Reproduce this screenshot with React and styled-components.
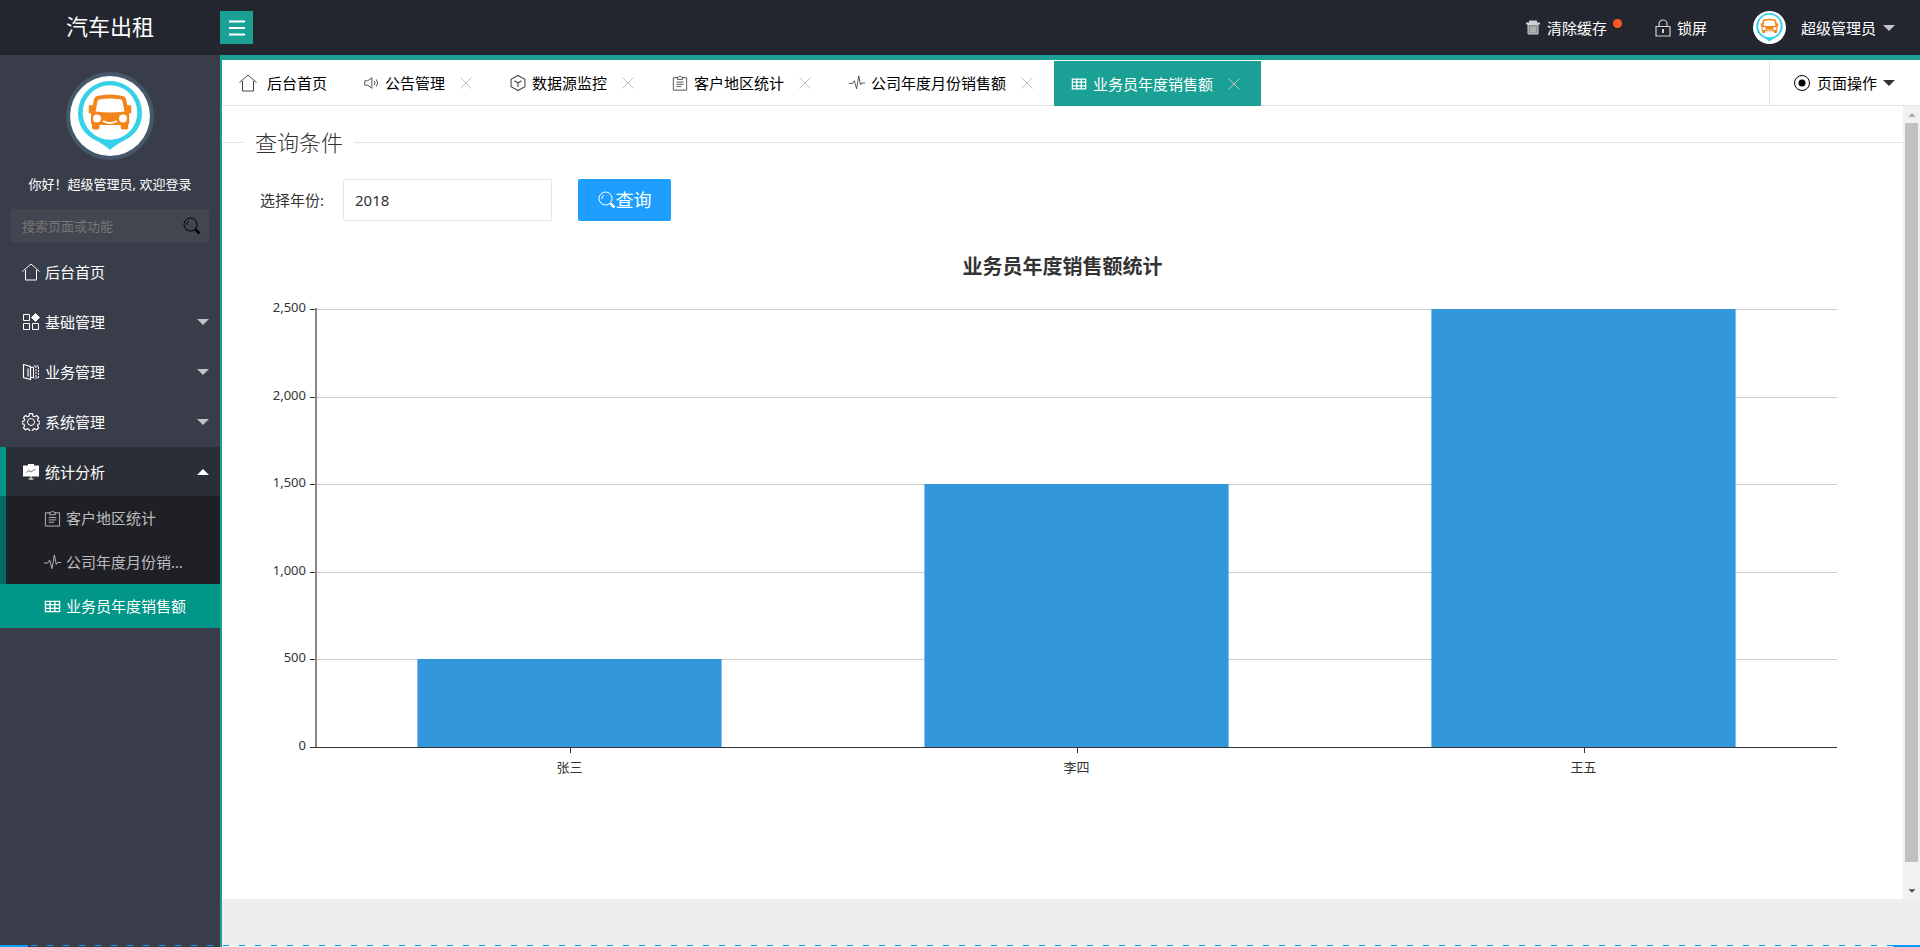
import { useLayoutEffect, useRef, useState } from "react";
import styled, { createGlobalStyle, ThemeProvider } from "styled-components";

const theme = {
    header: "#23262e",
    side: "#393d49",
    teal: "#1aa094",
    active: "#009688",
    blue: "#1e9fff",
    line: "#e2e2e2",
};

const GlobalStyle = createGlobalStyle`
    * {
        box-sizing: border-box;
    }
    body {
        margin: 0;
        font-family: "Noto Sans", "Noto Sans CJK SC", sans-serif;
        font-size: 15px;
        line-height: 24px;
        color: #333;
    }
    a {
        color: inherit;
        text-decoration: none;
    }
    button, input {
        font: inherit;
    }
    ul {
        list-style: none;
        margin: 0;
        padding: 0;
    }
`;

const Page = styled.div`
    display: flex;
    flex-direction: column;
    height: 100vh;
    min-height: 700px;
`;

const Header = styled.header`
    display: flex;
    align-items: center;
    height: 55px;
    background: ${({ theme }) => theme.header};
    color: #fff;
`;

const Brand = styled.h1`
    width: 220px;
    margin: 0;
    padding-bottom: 3px;
    font-size: 22px;
    font-weight: 400;
    text-align: center;
`;

const MenuButton = styled.button`
    display: grid;
    place-items: center;
    width: 33px;
    height: 33px;
    padding: 0;
    border: 0;
    background: ${({ theme }) => theme.teal};
    color: #fff;
`;

const HeaderNav = styled.nav`
    display: flex;
    align-items: center;
    margin-left: auto;
    padding-right: 25px;
`;

const HeaderLink = styled.a`
    position: relative;
    display: flex;
    align-items: center;
    gap: 5px;
    margin-right: ${({ $space }) => $space || 0}px;
    > svg {
        color: #d0d1d3;
    }
`;

const Dot = styled.span`
    position: absolute;
    top: 3px;
    right: -15px;
    width: 9px;
    height: 9px;
    border-radius: 50%;
    background: #ff5722;
`;

const UserName = styled.span`
    margin: 0 2px 0 10px;
`;

const Caret = styled.span`
    border: 6px solid transparent;
    border-top-color: ${({ color }) => color || "#c2c4c8"};
    border-bottom-width: 0;
    ${({ $up }) => $up && `
        border-top-width: 0;
        border-bottom: 6px solid #fff;
    `}
`;

const Main = styled.div`
    display: flex;
    flex: 1;
    min-height: 0;
`;

const Side = styled.aside`
    flex: none;
    width: 220px;
    background: ${({ theme }) => theme.side};
    color: #fff;
`;

const Profile = styled.div`
    display: flex;
    flex-direction: column;
    align-items: center;
    padding: 17px 11px 5px;
    font-size: 13px;
`;

const Avatar = styled.div`
    display: flex;
    border: 4px solid #44576b;
    border-radius: 50%;
`;

const Greeting = styled.p`
    margin: 12px 0 13px;
`;

const SearchBox = styled.label`
    display: flex;
    align-items: center;
    align-self: stretch;
    height: 33px;
    padding: 0 8px 0 11px;
    border-radius: 2px;
    background: #434650;
    color: #000;
`;

const SearchInput = styled.input`
    flex: 1;
    min-width: 0;
    padding: 0;
    border: 0;
    outline: 0;
    background: none;
    color: #fff;
    &::placeholder {
        color: #767676;
    }
`;

const MenuLink = styled.a`
    display: flex;
    align-items: center;
    gap: 5px;
    height: ${({ $open }) => ($open ? 49 : 50)}px;
    padding: 0 11px 0 22px;
    ${({ $open, theme }) => $open && `
        padding-left: 16px;
        border-left: 6px solid ${theme.active};
        background: #2b2e37;
    `}
    ${Caret} {
        margin-left: auto;
    }
`;

const SubLink = styled.a`
    display: flex;
    align-items: center;
    gap: 5px;
    height: 44px;
    padding: 0 28px 0 38px;
    border-left: 6px solid ${({ $active, theme }) => ($active ? theme.active : "#006b61")};
    background: ${({ $active, theme }) => ($active ? theme.active : "#1f2026")};
    color: ${({ $active }) => ($active ? "#fff" : "#bcbdbf")};
    svg {
        flex: none;
    }
    span {
        overflow: hidden;
        text-overflow: ellipsis;
        white-space: nowrap;
    }
`;

const Body = styled.main`
    display: flex;
    flex: 1;
    flex-direction: column;
    min-width: 0;
    border-top: 5px solid ${({ theme }) => theme.teal};
    border-left: 2px solid ${({ theme }) => theme.teal};
`;

const Tabs = styled.nav`
    display: flex;
    align-items: stretch;
    height: 46px;
    padding-top: 1px;
    border-bottom: 1px solid ${({ theme }) => theme.line};
`;

const Tab = styled.div`
    display: flex;
    align-items: center;
    gap: 5px;
    margin-bottom: ${({ $active }) => ($active ? -1 : 0)}px;
    padding: 0 ${({ $home }) => ($home ? 19 : 17)}px 0 17px;
    background: ${({ $active, theme }) => ($active ? theme.teal : "none")};
    color: ${({ $active }) => ($active ? "#fff" : "#000")};
    a {
        display: flex;
        align-items: center;
        gap: ${({ $home }) => ($home ? 10 : 6)}px;
        white-space: nowrap;
    }
    a svg {
        color: ${({ $active }) => ($active ? "#fff" : "#444")};
    }
`;

const CloseButton = styled.button`
    display: grid;
    place-items: center;
    width: 20px;
    height: 20px;
    margin-left: 6px;
    padding: 0;
    border: 0;
    background: none;
    color: #c2c2c2;
`;

const PageActions = styled.button`
    display: flex;
    align-items: center;
    gap: 6px;
    margin-left: auto;
    padding: 0 25px 0 23px;
    border: 0;
    border-left: 1px solid ${({ theme }) => theme.line};
    background: none;
    color: #000;
`;

const Frame = styled.section`
    display: flex;
    flex: 1;
    min-height: 0;
    background: #fff;
`;

const Content = styled.div`
    flex: 1;
    min-width: 0;
    padding-top: 21px;
`;

const Legend = styled.h2`
    display: flex;
    align-items: center;
    gap: 11px;
    margin: 0;
    font-size: 22px;
    font-weight: 300;
    line-height: 30px;
    &::before, &::after {
        content: "";
        width: 22px;
        height: 1px;
        background: ${({ theme }) => theme.line};
    }
    &::after {
        flex: 1;
    }
`;

const QueryForm = styled.form`
    display: flex;
    align-items: center;
    margin: 22px 0 0 38px;
`;

const YearInput = styled.input`
    width: 209px;
    height: 42px;
    margin: 0 26px 0 19px;
    padding: 0 11px;
    border: 1px solid #e6e6e6;
    border-radius: 2px;
    outline: 0;
    color: #333;
`;

const QueryButton = styled.button`
    display: flex;
    align-items: center;
    justify-content: center;
    width: 93px;
    height: 42px;
    padding: 0;
    border: 0;
    border-radius: 2px;
    background: ${({ theme }) => theme.blue};
    color: #fff;
    font-size: 18px;
`;

const ChartBox = styled.figure`
    margin: 32px 0 0;
`;

const ChartTitle = styled.figcaption`
    font-size: 20px;
    font-weight: 700;
    line-height: 28px;
    text-align: center;
`;

const ChartSvg = styled.svg`
    display: block;
    width: 100%;
    height: 510px;
    font-size: 13px;
    fill: #333;
`;

const ScrollBar = styled.div`
    display: flex;
    flex-direction: column;
    align-items: center;
    width: 17px;
    background: #f1f1f1;
`;

const ScrollArrow = styled.span`
    display: grid;
    place-items: center;
    height: 17px;
    color: ${({ color }) => color};
`;

const ScrollTrack = styled.div`
    display: flex;
    flex: 1;
    width: 13px;
    padding-bottom: 20px;
`;

const ScrollThumb = styled.div`
    flex: 1;
    background: #c1c1c1;
`;

const Footer = styled.footer`
    height: 48px;
    background: #eee;
`;

const BottomEdge = styled.div`
    position: fixed;
    left: 0;
    right: 0;
    bottom: 0;
    height: 2px;
    background:
        linear-gradient(#0a9cfd, #0a9cfd) left / 28px 2px no-repeat,
        linear-gradient(#0a9cfd, #0a9cfd) right / 27px 2px no-repeat,
        linear-gradient(90deg, #0a9cfd 6px, transparent 6px) 31px 0 / 16px 1px repeat-x;
`;

const shapes = {
    home: <path d="M.5 8.500 9 1l8.500 7.500M3.500 7v10h11V7" />,
    menu: <path d="M1 2.500h16M1 9h16M1 15.500h16" strokeWidth="2" />,
    blocks: (
        <>
            <path d="M1.500 1.500h6v6h-6zM1.500 10.500h6v6h-6zM10.500 10.500h6v6h-6z" />
            <path d="m13.500.5 4 4-4 4-4-4z" fill="currentColor" />
        </>
    ),
    book: (
        <>
            <path d="M1.500 1.500l7 2v13l-7-2zM6 5.500v8" strokeWidth="1.200" />
            <path d="M8.500 4.500h3v10h-3" />
            <path d="M11.500 3h5v12h-5M14 3v12" strokeDasharray="2 1" />
        </>
    ),
    gear: (
        <>
            <circle cx="9" cy="9" r="3.500" />
            <path
                d="M7.500.7h3l.5 2.300 1.600.7 2.100-1.200 2 2-1.200 2.100.6 1.500 2 .5v2l-2 .6-.6 1.500 1.100 2.100-1.900 1.900-2.100-1.100-1.500.7-.6 2h-3l-.5-2-1.500-.7-2.100 1.100-1.900-1.900 1.100-2.100-.6-1.500-2-.6v-2l2-.5.7-1.500-1.200-2.100 2-2 2.100 1.200 1.400-.7z"
                strokeWidth="1.200"
            />
        </>
    ),
    board: (
        <>
            <path d="M1 2.500h16v11H1zM6 1h6v2H6z" fill="currentColor" stroke="none" />
            <path d="M9 13v3.500M6.500 16h5" />
            <path d="m4.500 9.500 2.500-2 2 1.500 4.500-3" stroke="#6c7080" />
        </>
    ),
    clipboard: <path d="M6 3H1.500v14h15V3H12M6 5V2.500h1.500L9 1l1.500 1.500H12V5zM5 8h8M5 10.500h8M5 13h5.500" />,
    pulse: <path d="M0 9.500h4l2-3 2.500 9L11 1l2 10 1.500-2H18" />,
    table: <path d="M1.500 3.500h15v11h-15zM1.500 7h15M1.500 11h15M6.500 3.500v11M11.500 3.500v11" strokeWidth="1.400" />,
    speaker: <path d="M2 6.500h3.500L10 3v12l-4.500-3.500H2zM12.500 6.500q2 2.500 0 5M15 5q3 4 0 8" />,
    cube: <path d="m9 .5 7.800 4.300v8.400L9 17.500l-7.800-4.300V4.800zM5 6.500 9 9l4-2.500M9 9v4.500" strokeWidth="1.200" />,
    search: (
        <>
            <circle cx="7.500" cy="7.500" r="6.500" />
            <path d="M4 8a3.500 3.500 0 0 1 2-4" />
            <path d="m12.500 12.500 4 4" strokeWidth="2.500" />
        </>
    ),
    close: <path d="m3.500 3.500 11 11M14.500 3.500l-11 11" />,
    trash: (
        <>
            <path d="M2 4.500h14M6 4V2.500h6V4" strokeWidth="2" />
            <path d="M4 5.500h10V15H4z" fill="#8b8d92" />
            <path d="M7 7.500v6M9 7.500v6M11 7.500v6" />
        </>
    ),
    lock: (
        <>
            <path d="M2 7.500h14V17H2zM5 7.500V5a4 4 0 0 1 8 0v2.500" strokeWidth="1.200" />
            <path d="M9 10v4" strokeWidth="2" />
        </>
    ),
    radio: (
        <>
            <circle cx="9" cy="9" r="7.500" />
            <circle cx="9" cy="9" r="3.500" fill="currentColor" stroke="none" />
        </>
    ),
    up: <path d="m5 11 4-4 4 4z" fill="currentColor" stroke="none" />,
    down: <path d="m5 7 4 4 4-4z" fill="currentColor" stroke="none" />,
};

function Icon({ name, size = 18 }) {
    return (
        <svg width={size} height={size} viewBox="0 0 18 18" fill="none" stroke="currentColor" aria-hidden="true">
            {shapes[name]}
        </svg>
    );
}

function CarLogo({ size }) {
    return (
        <svg width={size} height={size} viewBox="0 0 80 80" role="img" aria-label="汽车出租">
            <circle cx="40" cy="40" r="40" fill="#fff" />
            <path d="M40 5a32 32 0 0 1 32 32c0 13-7 22-17 27-6 3-11 6-15 10-4-4-9-7-15-10C15 59 8 50 8 37A32 32 0 0 1 40 5z" fill="#35d1e9" />
            <circle cx="40" cy="36.5" r="27.300" fill="#fff" />
            <path d="M27 20q13-3 26 0 2 .5 3 3l2.500 12 .7 3v10h-1v3.500q0 2-2 2h-3.500q-2 0-2-2V49H29.500v2.500q0 2-2 2H24q-2 0-2-2V48h-1V38l.7-3L24 23q1-2.500 3-3z" fill="#f28519" />
            <path d="M29 23.500q11-2 22 0 1 .5 1.500 2l2 10q-14.500 2-29 0l2-10q.5-1.500 1.500-2z" fill="#fff" />
            <path d="M23 30h-3.500v6.500H22M57 30h3.500v6.500H58" fill="#f28519" stroke="#f28519" strokeWidth="1.500" />
            <circle cx="27" cy="42.500" r="4" fill="#fff" />
            <circle cx="53" cy="42.500" r="4" fill="#fff" />
            <path d="M33 45q7 4 14 0" fill="none" stroke="#fff" strokeWidth="2" />
        </svg>
    );
}

const menu = [
    { icon: "home", text: "后台首页" },
    { icon: "blocks", text: "基础管理", more: true },
    { icon: "book", text: "业务管理", more: true },
    { icon: "gear", text: "系统管理", more: true },
];

const subMenu = [
    { icon: "clipboard", text: "客户地区统计" },
    { icon: "pulse", text: "公司年度月份销售额" },
    { icon: "table", text: "业务员年度销售额", active: true },
];

const tabs = [
    { icon: "speaker", text: "公告管理" },
    { icon: "cube", text: "数据源监控" },
    { icon: "clipboard", text: "客户地区统计" },
    { icon: "pulse", text: "公司年度月份销售额" },
    { icon: "table", text: "业务员年度销售额", active: true },
];

const sales = [
    { name: "张三", value: 500 },
    { name: "李四", value: 1500 },
    { name: "王五", value: 2500 },
];

const ticks = [0, 500, 1000, 1500, 2000, 2500];

function BarChart() {
    const ref = useRef(null);
    const [width, setWidth] = useState(0);

    useLayoutEffect(() => {
        const measure = () => setWidth(ref.current.getBoundingClientRect().width);
        measure();
        window.addEventListener("resize", measure);
        return () => window.removeEventListener("resize", measure);
    }, []);

    const left = 94;
    const right = width - 66;
    const top = 28;
    const bottom = 466;
    const y = (value) => Math.round(bottom - (value / 2500) * (bottom - top));
    const band = (right - left) / sales.length;

    return (
        <ChartBox>
            <ChartTitle>业务员年度销售额统计</ChartTitle>
            <ChartSvg ref={ref}>
                {width > 0 && (
                    <>
                        {ticks.map((tick) => (
                            <g key={tick}>
                                <rect x={left} y={y(tick)} width={right - left} height="1" fill="#ccc" />
                                <rect x={left - 6} y={y(tick)} width="6" height="1" />
                                <text x={left - 10} y={y(tick) + 3} textAnchor="end">
                                    {tick.toLocaleString("en-US")}
                                </text>
                            </g>
                        ))}
                        {sales.map(({ name, value }, i) => (
                            <g key={name}>
                                <rect
                                    x={left + band * (i + 0.2)}
                                    y={y(value)}
                                    width={band * 0.6}
                                    height={bottom - y(value)}
                                    fill="#3398db"
                                />
                                <rect x={Math.round(left + band * (i + 0.5))} y={bottom} width="1" height="6" />
                                <text x={left + band * (i + 0.5)} y={bottom + 25} textAnchor="middle">
                                    {name}
                                </text>
                            </g>
                        ))}
                        <rect x={left - 1} y={top - 1} width="2" height={bottom - top + 1} fill="#888" />
                        <rect x={left} y={bottom} width={right - left} height="1" />
                    </>
                )}
            </ChartSvg>
        </ChartBox>
    );
}

function TopBar() {
    return (
        <Header>
            <Brand>汽车出租</Brand>
            <MenuButton type="button" aria-label="菜单">
                <Icon name="menu" />
            </MenuButton>
            <HeaderNav>
                <HeaderLink href="#cache" $space={47}>
                    <Icon name="trash" />
                    清除缓存
                    <Dot />
                </HeaderLink>
                <HeaderLink href="#lock" $space={46}>
                    <Icon name="lock" />
                    锁屏
                </HeaderLink>
                <HeaderLink href="#user">
                    <CarLogo size={33} />
                    <UserName>超级管理员</UserName>
                    <Caret />
                </HeaderLink>
            </HeaderNav>
        </Header>
    );
}

function SideMenu() {
    return (
        <Side>
            <Profile>
                <Avatar>
                    <CarLogo size={80} />
                </Avatar>
                <Greeting>你好！超级管理员, 欢迎登录</Greeting>
                <SearchBox>
                    <SearchInput type="text" placeholder="搜索页面或功能" aria-label="搜索页面或功能" />
                    <Icon name="search" />
                </SearchBox>
            </Profile>
            <ul>
                {menu.map(({ icon, text, more }) => (
                    <li key={text}>
                        <MenuLink href="#menu">
                            <Icon name={icon} />
                            {text}
                            {more && <Caret />}
                        </MenuLink>
                    </li>
                ))}
                <li>
                    <MenuLink href="#menu" $open>
                        <Icon name="board" />
                        统计分析
                        <Caret $up />
                    </MenuLink>
                    <ul>
                        {subMenu.map(({ icon, text, active }) => (
                            <li key={text}>
                                <SubLink href="#stat" $active={active}>
                                    <Icon name={icon} size={17} />
                                    <span>{text}</span>
                                </SubLink>
                            </li>
                        ))}
                    </ul>
                </li>
            </ul>
        </Side>
    );
}

function TabBar() {
    return (
        <Tabs>
            <Tab $home>
                <a href="#home">
                    <Icon name="home" />
                    后台首页
                </a>
            </Tab>
            {tabs.map(({ icon, text, active }) => (
                <Tab key={text} $active={active}>
                    <a href="#tab">
                        <Icon name={icon} size={16} />
                        {text}
                    </a>
                    <CloseButton type="button" aria-label="关闭">
                        <Icon name="close" />
                    </CloseButton>
                </Tab>
            ))}
            <PageActions type="button">
                <Icon name="radio" />
                页面操作
                <Caret color="#333" />
            </PageActions>
        </Tabs>
    );
}

export default function App() {
    return (
        <ThemeProvider theme={theme}>
            <GlobalStyle />
            <Page>
                <TopBar />
                <Main>
                    <SideMenu />
                    <Body>
                        <TabBar />
                        <Frame>
                            <Content>
                                <Legend>查询条件</Legend>
                                <QueryForm>
                                    <label htmlFor="year">选择年份:</label>
                                    <YearInput id="year" type="text" defaultValue="2018" />
                                    <QueryButton type="button">
                                        <Icon name="search" />
                                        查询
                                    </QueryButton>
                                </QueryForm>
                                <BarChart />
                            </Content>
                            <ScrollBar>
                                <ScrollArrow color="#a3a3a3">
                                    <Icon name="up" size={16} />
                                </ScrollArrow>
                                <ScrollTrack>
                                    <ScrollThumb />
                                </ScrollTrack>
                                <ScrollArrow color="#505050">
                                    <Icon name="down" size={16} />
                                </ScrollArrow>
                            </ScrollBar>
                        </Frame>
                        <Footer />
                    </Body>
                </Main>
            </Page>
            <BottomEdge />
        </ThemeProvider>
    );
}
